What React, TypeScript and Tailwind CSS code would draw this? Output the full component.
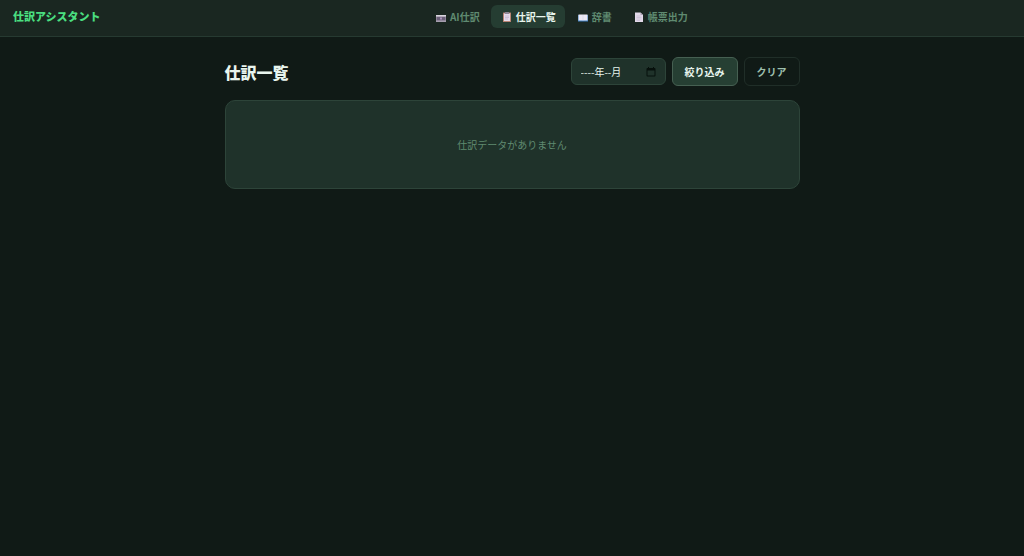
import type { ReactNode } from 'react';

interface NavItem {
  label: string;
  href: string;
  icon: ReactNode;
  active?: boolean;
}

function PagerIcon() {
  return (
    <svg viewBox="0 0 20 20" className="h-[10px] w-[10px]" aria-hidden="true">
      <rect x="0" y="6" width="20" height="14" rx="1" fill="#8b8195" />
      <rect x="0" y="6" width="20" height="3" fill="#d9d5de" />
      <rect x="2" y="10" width="16" height="7" fill="#6a5f78" />
      <rect x="8" y="11" width="4" height="4" fill="#a893ba" />
      <rect x="0" y="17" width="20" height="3" fill="#a59eae" />
    </svg>
  );
}

function ClipboardIcon() {
  return (
    <svg viewBox="0 0 20 20" className="h-[10px] w-[10px]" aria-hidden="true">
      <rect x="2" y="1" width="16" height="19" rx="1" fill="#b98474" />
      <rect x="4" y="3" width="12" height="15" fill="#e6dcec" />
      <rect x="6" y="0" width="8" height="4" rx="1" fill="#8d8797" />
      <path d="M6 8h8M6 11h8M6 14h6" stroke="#b3a5c2" strokeWidth="1" />
    </svg>
  );
}

function BookIcon() {
  return (
    <svg viewBox="0 0 20 20" className="h-[10px] w-[10px]" aria-hidden="true">
      <path d="M0 6h20v13H0z" fill="#3d7fc4" />
      <path d="M1 5h18v12H1z" fill="#ece8f4" />
      <path d="M10 6v11" stroke="#cfcde0" strokeWidth="1" />
    </svg>
  );
}

function PageIcon() {
  return (
    <svg viewBox="0 0 20 20" className="h-[10px] w-[10px]" aria-hidden="true">
      <path d="M2 1h11l5 5v14H2z" fill="#e2d9e9" />
      <path d="M13 1v5h5z" fill="#a99fb4" />
      <path d="M5 8h10M5 11h10M5 14h10M5 17h7" stroke="#b9adc6" strokeWidth="1" />
    </svg>
  );
}

function CalendarIcon() {
  return (
    <svg viewBox="0 0 20 20" className="h-[10px] w-[10px] shrink-0" aria-hidden="true">
      <path
        fillRule="evenodd"
        fill="#07100c"
        d="M4 0h2v2h8V0h2v2h1a2 2 0 0 1 2 2v13a2 2 0 0 1-2 2H3a2 2 0 0 1-2-2V4a2 2 0 0 1 2-2h1zM3 7v10h14V7z"
      />
    </svg>
  );
}

const navItems: NavItem[] = [
  { label: 'AI仕訳', href: '#ai', icon: <PagerIcon /> },
  { label: '仕訳一覧', href: '#journals', icon: <ClipboardIcon />, active: true },
  { label: '辞書', href: '#dictionary', icon: <BookIcon /> },
  { label: '帳票出力', href: '#reports', icon: <PageIcon /> },
];

function Navbar() {
  return (
    <header className="flex h-[37px] items-center gap-[10px] border-b border-[#263a31] bg-[#1a2721] px-[13px] pb-1">
      <a href="#top" className="text-[11px] font-black text-[#4ade80]">
        仕訳アシスタント
      </a>
      <nav className="flex flex-1 justify-center gap-[2px]">
        {navItems.map((item) => (
          <a
            key={item.label}
            href={item.href}
            aria-current={item.active ? 'page' : undefined}
            className={`flex h-[23px] items-center gap-1 rounded-md pr-[9px] pl-[11px] text-[10px] font-bold ${
              item.active ? 'bg-[#253d32] text-[#e8f5ee]' : 'text-[#5f8a70]'
            }`}
          >
            <span className="pt-px">{item.icon}</span>
            {item.label}
          </a>
        ))}
      </nav>
    </header>
  );
}

export default function App() {
  return (
    <div className="min-h-screen bg-[#101a16] font-['Noto_Sans_CJK_JP',sans-serif] text-[#e8f5ee]">
      <Navbar />
      <main className="mx-auto max-w-[575px] pt-5">
        <div className="mb-[14px] flex items-center justify-between">
          <h1 className="text-[16px] leading-6 font-black">仕訳一覧</h1>
          <form className="flex items-center gap-[6px]" onSubmit={(e) => e.preventDefault()}>
            <label className="flex h-[27px] w-[95px] items-center rounded-md border border-[#2d4439] bg-[#1f322a] px-[9px]">
              <input
                type="text"
                aria-label="対象年月"
                defaultValue="----年--月"
                className="w-full min-w-0 bg-transparent text-[10px] outline-none"
              />
              <CalendarIcon />
            </label>
            <button
              type="submit"
              className="h-[29px] rounded-md border border-[#466052] bg-[#263f33] px-3 text-[10px] font-bold"
            >
              絞り込み
            </button>
            <button
              type="reset"
              className="h-[29px] rounded-md border border-[#202e28] px-3 text-[10px] font-bold text-[#9dbfac]"
            >
              クリア
            </button>
          </form>
        </div>
        <section className="flex h-[89px] items-center justify-center rounded-[10px] border border-[#2d4439] bg-[#1f322a]">
          <p className="text-[10px] text-[#5f8a70]">仕訳データがありません</p>
        </section>
      </main>
    </div>
  );
}
